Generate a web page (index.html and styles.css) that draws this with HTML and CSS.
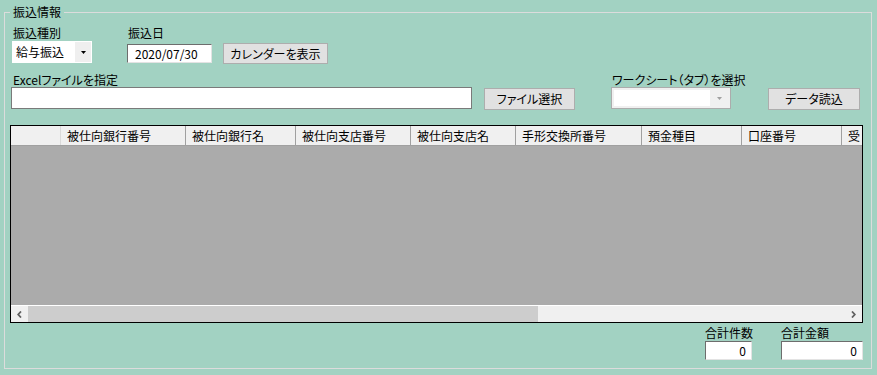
FILE: index.html
```html
<!DOCTYPE html>
<html lang="ja">
<head>
    <meta charset="UTF-8">
    <meta name="viewport" content="width=device-width, initial-scale=1.0">
    <title>振込情報</title>
    <link rel="stylesheet" href="styles.css">
</head>
<body>
    <fieldset class="grupo">
        <legend>振込情報</legend>

        <div class="linha linha-topo">
            <div class="campo campo-tipo">
                <label class="rotulo">振込種別</label>
                <div class="combo">
                    <span class="combo-texto">給与振込</span>
                    <span class="combo-botao">
                        <svg width="5" height="3" viewBox="0 0 5 3"><path d="M0 0h5L2.5 3z" fill="#000"/></svg>
                    </span>
                </div>
            </div>
            <div class="campo campo-data">
                <label class="rotulo">振込日</label>
                <input type="text" class="entrada data" value="2020/07/30">
            </div>
            <button type="button" class="botao botao-cal">カレンダーを表示</button>
        </div>

        <div class="linha linha-arquivo">
            <div class="campo campo-excel">
                <label class="rotulo">Excelファイルを指定</label>
                <input type="text" class="entrada caminho">
            </div>
            <button type="button" class="botao botao-arquivo">ファイル選択</button>
            <div class="campo campo-folha">
                <label class="rotulo">ワークシート（タブ）を選択</label>
                <div class="combo combo-off">
                    <span class="combo-branco"></span>
                    <span class="combo-botao">
                        <svg width="5" height="3" viewBox="0 0 5 3"><path d="M0 0h5L2.5 3z" fill="#a0a0a0"/></svg>
                    </span>
                </div>
            </div>
            <button type="button" class="botao botao-ler">データ読込</button>
        </div>

        <div class="tabela">
            <div class="cabecalho">
                <div class="cel canto"></div>
                <div class="cel">被仕向銀行番号</div>
                <div class="cel">被仕向銀行名</div>
                <div class="cel">被仕向支店番号</div>
                <div class="cel">被仕向支店名</div>
                <div class="cel">手形交換所番号</div>
                <div class="cel">預金種目</div>
                <div class="cel">口座番号</div>
                <div class="cel ultima">受</div>
            </div>
            <div class="corpo"></div>
            <div class="rolagem">
                <span class="seta">
                    <svg width="5" height="7" viewBox="0 0 5 7"><path d="M4 0.5L1.2 3.5 4 6.5" fill="none" stroke="#606060" stroke-width="1.8"/></svg>
                </span>
                <span class="polegar"></span>
                <span class="trilho"></span>
                <span class="seta">
                    <svg width="5" height="7" viewBox="0 0 5 7"><path d="M1 0.5L3.8 3.5 1 6.5" fill="none" stroke="#606060" stroke-width="1.8"/></svg>
                </span>
            </div>
        </div>

        <div class="linha linha-total">
            <div class="campo">
                <label class="rotulo">合計件数</label>
                <input type="text" class="entrada total total-qtd" value="0">
            </div>
            <div class="campo">
                <label class="rotulo">合計金額</label>
                <input type="text" class="entrada total total-valor" value="0">
            </div>
        </div>
    </fieldset>
</body>
</html>
```

FILE: styles.css
```css
body {
    font-family: "Noto Sans CJK JP", "Noto Sans", sans-serif;
    font-size: 12px;
    font-feature-settings: "palt";
    color: #000;
    background-color: #a2d2c2;
    margin: 0;
}
.grupo {
    margin: 4px 5px 0 4px;
    padding: 5px 8px 8px 5px;
    border: 1px solid #dcdcdc;
    min-width: 0;
}
legend {
    padding: 0 3px;
    line-height: 16px;
}
.linha {
    display: flex;
    align-items: flex-start;
}
.linha > * {
    flex-shrink: 0;
}
.campo {
    display: flex;
    flex-direction: column;
    align-items: flex-start;
}
.rotulo {
    line-height: 16px;
    margin-left: 1px;
    white-space: nowrap;
}
.entrada {
    font-family: inherit;
    font-size: 12px;
    font-feature-settings: "palt";
    color: #000;
    background: #fff;
    box-sizing: border-box;
    margin: 0;
    outline: none;
}
.botao {
    font-family: inherit;
    font-size: 12px;
    font-feature-settings: "palt";
    color: #000;
    background-color: #e1e1e1;
    border: 1px solid #adadad;
    box-sizing: border-box;
    padding: 0;
    margin: 0;
    line-height: 18px;
    white-space: nowrap;
}

/* linha de cima */
.campo-tipo {
    margin-left: 2px;
}
.combo {
    display: flex;
    box-sizing: border-box;
    width: 80px;
    height: 22px;
    background: #fff;
}
.combo-texto {
    flex: 1;
    padding-left: 4px;
    line-height: 22px;
}
.combo-botao {
    width: 16px;
    margin: 1px 1px 1px 0;
    background: #efefef;
    display: flex;
    align-items: center;
    justify-content: center;
}
.campo-data {
    margin-left: 35px;
}
.data {
    width: 85px;
    height: 19px;
    margin-top: 3px;
    padding: 0 0 0 7px;
    border: 1px solid;
    border-color: #6d6d6d #e3e3e3 #e3e3e3 #6d6d6d;
}
.botao-cal {
    width: 105px;
    height: 21px;
    margin-left: 11px;
    margin-top: 18px;
}

/* linha do arquivo */
.linha-arquivo {
    margin-top: 8px;
}
.campo-excel .rotulo {
    margin-left: 3px;
}
.caminho {
    width: 461px;
    height: 22px;
    margin: -1px 0 0 1px;
    padding: 0 4px;
    border: 1px solid #7a7a7a;
}
.botao-arquivo {
    width: 91px;
    height: 22px;
    margin-left: 12px;
    margin-top: 16px;
}
.campo-folha {
    margin-left: 36px;
    width: 120px;
}
.combo-off {
    width: 120px;
    margin-top: -1px;
    border: 1px solid #acacac;
    background: #f0f0f0;
    padding: 2px;
}
.combo-branco {
    flex: 1;
    background: #fff;
}
.combo-off .combo-botao {
    width: 18px;
    margin: 0;
    background: #f0f0f0;
}
.botao-ler {
    width: 92px;
    height: 22px;
    margin-left: 37px;
    margin-top: 16px;
}

/* tabela */
.tabela {
    margin-top: 15px;
    width: 853px;
    height: 198px;
    box-sizing: border-box;
    border: 1px solid #000;
    display: flex;
    flex-direction: column;
    overflow: hidden;
}
.cabecalho {
    display: grid;
    grid-template-columns: 50px 125px 110px 115px 105px 126px 100px 100px 1fr;
    height: 20px;
    flex-shrink: 0;
    box-sizing: border-box;
    background: #f0f0f0;
    border-bottom: 1px solid #a0a0a0;
}
.cel {
    border-right: 1px solid #a0a0a0;
    padding-left: 6px;
    line-height: 19px;
    white-space: nowrap;
    overflow: hidden;
}
.canto {
    border-right-color: #dadada;
}
.ultima {
    border-right: none;
}
.corpo {
    flex: 1;
    background: #ababab;
    border-bottom: 1px solid #fff;
}
.rolagem {
    display: flex;
    height: 16px;
    flex-shrink: 0;
    background: #f0f0f0;
}
.seta {
    width: 17px;
    display: flex;
    align-items: center;
    justify-content: center;
}
.polegar {
    width: 510px;
    background: #cdcdcd;
}
.trilho {
    flex: 1;
}

/* totais */
.linha-total {
    justify-content: flex-end;
    gap: 28px;
    margin-top: 2px;
}
.linha-total .rotulo {
    margin-left: 0;
}
.total {
    height: 19px;
    padding: 0 5px 0 0;
    text-align: right;
    border: 1px solid;
    border-color: #6d6d6d #e3e3e3 #e3e3e3 #6d6d6d;
}
.total-qtd {
    width: 47px;
}
.total-valor {
    width: 82px;
}
```
